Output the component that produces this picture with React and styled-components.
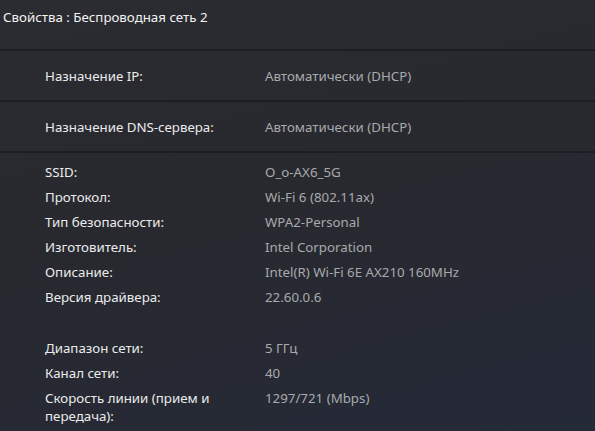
import styled, { createGlobalStyle } from "styled-components";

const GlobalStyle = createGlobalStyle`
  html, body {
    margin: 0;
    padding: 0;
    height: 100%;
  }
  body {
    background: #28292e;
    font-family: "Noto Sans", "Open Sans", sans-serif;
    overflow: hidden;
  }
`;

const details = [
  [
    ["SSID:", "O_o-AX6_5G"],
    ["Протокол:", "Wi-Fi 6 (802.11ax)"],
    ["Тип безопасности:", "WPA2-Personal"],
    ["Изготовитель:", "Intel Corporation"],
    ["Описание:", "Intel(R) Wi-Fi 6E AX210 160MHz"],
    ["Версия драйвера:", "22.60.0.6"],
  ],
  [
    ["Диапазон сети:", "5 ГГц"],
    ["Канал сети:", "40"],
    ["Скорость линии (прием и передача):", "1297/721 (Mbps)"],
  ],
];

const App = () => {
  return (
    <Window>
      <GlobalStyle />
      <Header>
        <Title>Свойства : Беспроводная сеть 2</Title>
      </Header>
      <SettingRow>
        <Label>Назначение IP:</Label>
        <Value>Автоматически (DHCP)</Value>
      </SettingRow>
      <SettingRow>
        <Label>Назначение DNS-сервера:</Label>
        <Value>Автоматически (DHCP)</Value>
      </SettingRow>
      <Details>
        {details.map((group, i) => (
          <Group key={i}>
            {group.map(([label, value]) => (
              <Pair key={label}>
                <Label>{label}</Label>
                <Value>{value}</Value>
              </Pair>
            ))}
          </Group>
        ))}
      </Details>
    </Window>
  );
};

// styled components

const Window = styled.div`
  width: 595px;
  height: 431px;
  overflow: hidden;
  background: linear-gradient(165deg, #2b2c31 0%, #28292f 45%, #252a38 100%);
  font-size: 13.3px;
`;

const Header = styled.div`
  height: 49px;
  padding: 8px 0 0 3px;
  box-sizing: border-box;
`;

const Title = styled.div`
  color: #f2f2f2;
  line-height: 18px;
`;

const SettingRow = styled.div`
  display: grid;
  grid-template-columns: 205px 1fr;
  column-gap: 15px;
  align-items: center;
  height: 51px;
  box-sizing: border-box;
  padding: 1px 0 0 45px;
  border-top: 2px solid #1d1e22;
`;

const Details = styled.div`
  border-top: 2px solid #1d1e22;
  padding: 10px 0 0 45px;
  display: flex;
  flex-direction: column;
  gap: 33px;
`;

const Group = styled.div`
  display: flex;
  flex-direction: column;
  gap: 7px;
`;

const Pair = styled.div`
  display: grid;
  grid-template-columns: 205px 1fr;
  column-gap: 15px;
  align-items: start;
`;

const Label = styled.div`
  color: #ebebeb;
  line-height: 18px;
`;

const Value = styled.div`
  color: #a8a9ac;
  line-height: 18px;
`;

export default App;
